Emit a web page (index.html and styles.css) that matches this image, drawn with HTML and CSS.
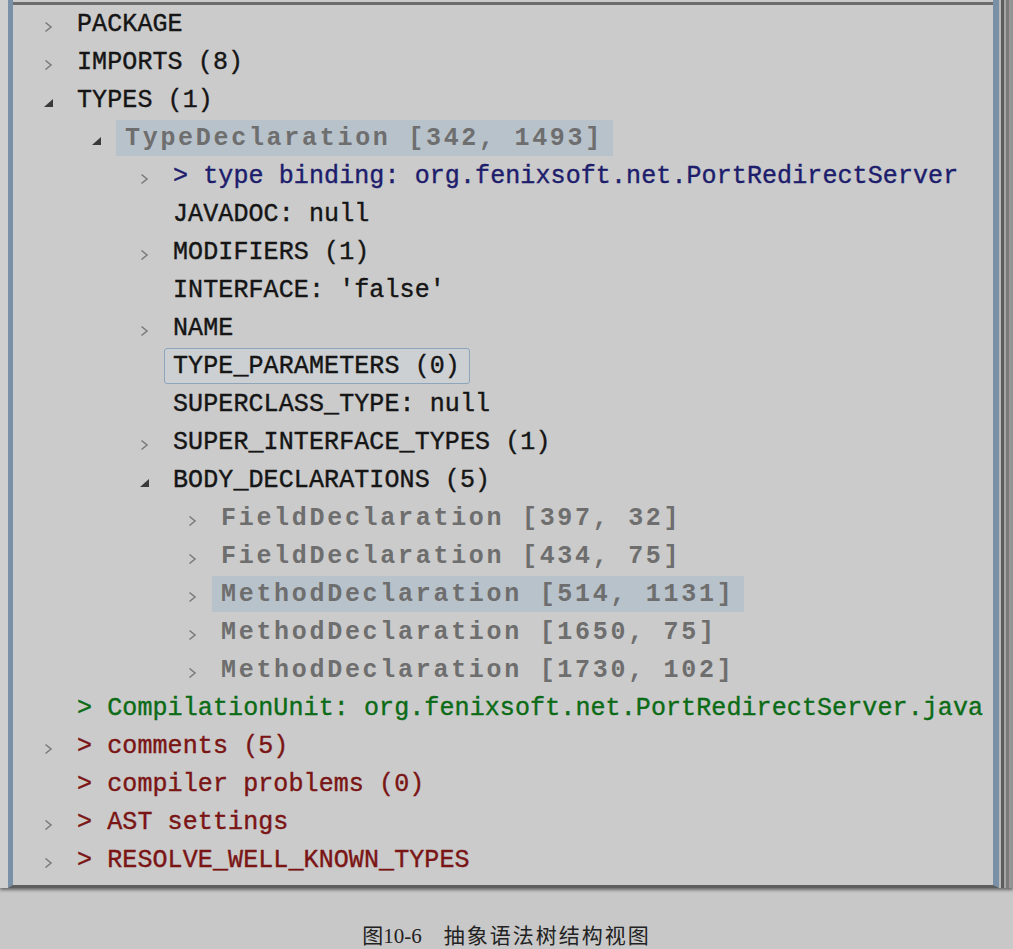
FILE: index.html
```html
<!DOCTYPE html>
<html lang="zh">
<head>
<meta charset="utf-8">
<title>AST View</title>
<link rel="stylesheet" href="styles.css">
</head>
<body>
<div class="screen">
  <div class="window">
    <div class="pane">
      <div class="content">
        <ul class="tree">
          <li class="row l0"><span class="twisty"><svg class="chev" viewBox="0 0 9 12"><path d="M1.5 1.5 L7 6 L1.5 10.5"/></svg></span><span class="label">PACKAGE</span></li>
          <li class="row l0"><span class="twisty"><svg class="chev" viewBox="0 0 9 12"><path d="M1.5 1.5 L7 6 L1.5 10.5"/></svg></span><span class="label">IMPORTS (8)</span></li>
          <li class="row l0"><span class="twisty"><svg class="tri" viewBox="0 0 9 8"><path d="M9 0 L9 8 L0 8 Z"/></svg></span><span class="label">TYPES (1)</span></li>
          <li class="row l1"><span class="twisty"><svg class="tri" viewBox="0 0 9 8"><path d="M9 0 L9 8 L0 8 Z"/></svg></span><span class="label node selected">TypeDeclaration [342, 1493]</span></li>
          <li class="row l2"><span class="twisty"><svg class="chev" viewBox="0 0 9 12"><path d="M1.5 1.5 L7 6 L1.5 10.5"/></svg></span><span class="label binding">&gt; type binding: org.fenixsoft.net.PortRedirectServer</span></li>
          <li class="row l2"><span class="twisty"></span><span class="label">JAVADOC: null</span></li>
          <li class="row l2"><span class="twisty"><svg class="chev" viewBox="0 0 9 12"><path d="M1.5 1.5 L7 6 L1.5 10.5"/></svg></span><span class="label">MODIFIERS (1)</span></li>
          <li class="row l2"><span class="twisty"></span><span class="label">INTERFACE: 'false'</span></li>
          <li class="row l2"><span class="twisty"><svg class="chev" viewBox="0 0 9 12"><path d="M1.5 1.5 L7 6 L1.5 10.5"/></svg></span><span class="label">NAME</span></li>
          <li class="row l2"><span class="twisty"></span><span class="label focused">TYPE_PARAMETERS (0)</span></li>
          <li class="row l2"><span class="twisty"></span><span class="label">SUPERCLASS_TYPE: null</span></li>
          <li class="row l2"><span class="twisty"><svg class="chev" viewBox="0 0 9 12"><path d="M1.5 1.5 L7 6 L1.5 10.5"/></svg></span><span class="label">SUPER_INTERFACE_TYPES (1)</span></li>
          <li class="row l2"><span class="twisty"><svg class="tri" viewBox="0 0 9 8"><path d="M9 0 L9 8 L0 8 Z"/></svg></span><span class="label">BODY_DECLARATIONS (5)</span></li>
          <li class="row l3"><span class="twisty"><svg class="chev" viewBox="0 0 9 12"><path d="M1.5 1.5 L7 6 L1.5 10.5"/></svg></span><span class="label node">FieldDeclaration [397, 32]</span></li>
          <li class="row l3"><span class="twisty"><svg class="chev" viewBox="0 0 9 12"><path d="M1.5 1.5 L7 6 L1.5 10.5"/></svg></span><span class="label node">FieldDeclaration [434, 75]</span></li>
          <li class="row l3"><span class="twisty"><svg class="chev" viewBox="0 0 9 12"><path d="M1.5 1.5 L7 6 L1.5 10.5"/></svg></span><span class="label node selected">MethodDeclaration [514, 1131]</span></li>
          <li class="row l3"><span class="twisty"><svg class="chev" viewBox="0 0 9 12"><path d="M1.5 1.5 L7 6 L1.5 10.5"/></svg></span><span class="label node">MethodDeclaration [1650, 75]</span></li>
          <li class="row l3"><span class="twisty"><svg class="chev" viewBox="0 0 9 12"><path d="M1.5 1.5 L7 6 L1.5 10.5"/></svg></span><span class="label node">MethodDeclaration [1730, 102]</span></li>
          <li class="row l0"><span class="twisty"></span><span class="label unit">&gt; CompilationUnit: org.fenixsoft.net.PortRedirectServer.java</span></li>
          <li class="row l0"><span class="twisty"><svg class="chev" viewBox="0 0 9 12"><path d="M1.5 1.5 L7 6 L1.5 10.5"/></svg></span><span class="label info">&gt; comments (5)</span></li>
          <li class="row l0"><span class="twisty"></span><span class="label info">&gt; compiler problems (0)</span></li>
          <li class="row l0"><span class="twisty"><svg class="chev" viewBox="0 0 9 12"><path d="M1.5 1.5 L7 6 L1.5 10.5"/></svg></span><span class="label info">&gt; AST settings</span></li>
          <li class="row l0"><span class="twisty"><svg class="chev" viewBox="0 0 9 12"><path d="M1.5 1.5 L7 6 L1.5 10.5"/></svg></span><span class="label info">&gt; RESOLVE_WELL_KNOWN_TYPES</span></li>
        </ul>
      </div>
    </div>
    <div class="edge"></div>
  </div>
  <p class="caption"><span class="fig">图10-6</span><span class="title">抽象语法树结构视图</span></p>
</div>
</body>
</html>
```
FILE: styles.css
```css
html, body {
  margin: 0;
  padding: 0;
  background: #c8c8c8;
}

.screen {
  width: 1013px;
  height: 949px;
  overflow: hidden;
}

.window {
  display: flex;
  height: 888px;
  padding-left: 8px;
  background: #cfcfcf;
  box-shadow: 0 2px 3px rgba(40, 40, 40, 0.6);
}

.pane {
  flex: 1;
  display: flex;
  flex-direction: column;
  border-left: 5px solid #7a90a6;
  border-right: 6px solid #7a90a6;
  border-bottom: 3px solid #5e5e5e;
  background: #cbcbcb;
}

.content {
  flex: 1;
  margin-top: 2px;
  border-top: 3px solid #6c6c6c;
  overflow: hidden;
}

.edge {
  width: 17px;
  background: linear-gradient(90deg, #b9b9b9 0, #b9b9b9 2px, #5c5c5c 2px, #5c5c5c 5px, #a5a5a5 5px, #a5a5a5 7px, #7a7a7a 7px, #7a7a7a 10px, #9a9a9a 10px, #8a8a8a 17px);
}

.tree {
  list-style: none;
  margin: 0;
  padding: 0;
  font-family: "Liberation Mono", "DejaVu Sans Mono", monospace;
  font-size: 25px;
  letter-spacing: 0.1px;
  color: #151515;
  -webkit-text-stroke: 0.4px currentColor;
}

.row {
  display: flex;
  align-items: center;
  height: 38px;
  white-space: nowrap;
}

.l0 { padding-left: 27px; }
.l1 { padding-left: 75px; }
.l2 { padding-left: 123px; }
.l3 { padding-left: 171px; }

.twisty {
  width: 28px;
  height: 38px;
  display: flex;
  align-items: center;
  padding-left: 4px;
  box-sizing: border-box;
  flex: none;
}

.chev {
  width: 9px;
  height: 12px;
  margin-top: 5px;
}

.chev path {
  fill: none;
  stroke: #7c7c7c;
  stroke-width: 1.6;
}

.tri {
  width: 9px;
  height: 8px;
  margin-top: 5px;
}

.tri path {
  fill: #3a3a3a;
}

.label {
  display: flex;
  align-items: center;
  height: 36px;
  padding: 0 9px 0 8px;
  box-sizing: border-box;
  border: 1px solid transparent;
  border-radius: 3px;
}

.node {
  font-weight: bold;
  color: #6e6e6e;
  letter-spacing: 2.7px;
  -webkit-text-stroke: 0;
}

.selected {
  background: #b8c2cb;
  border-color: #b8c2cb;
  border-radius: 0;
}

.focused {
  border-color: #8ea4bb;
  background: #cdd0d3;
}

.binding { color: #1d1d6c; }
.unit { color: #0c6b16; }
.info { color: #7a1515; }

.caption {
  margin: 34px 0 0 0;
  text-align: center;
  font-family: "Liberation Serif", "Noto Sans CJK SC", serif;
  font-size: 21px;
  color: #222;
  line-height: 28px;
}

.fig {
  margin-right: 22px;
}

.title {
  letter-spacing: 2px;
}
```
